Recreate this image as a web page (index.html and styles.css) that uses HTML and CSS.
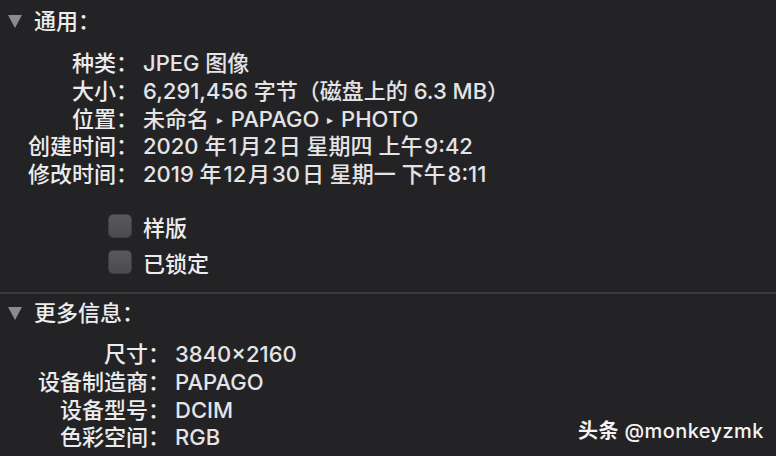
FILE: index.html
```html
<!DOCTYPE html>
<html lang="zh-CN">
<head>
<meta charset="utf-8">
<link rel="stylesheet" href="styles.css">
</head>
<body>
<div class="panel">
  <section class="sec sec-general">
    <div class="sec-head"><span class="tri"></span><span>通用：</span></div>
    <div class="props props-1">
      <div class="lbl">种类：</div><div class="val">JPEG 图像</div>
      <div class="lbl">大小：</div><div class="val">6,291,456 字节（磁盘上的 6.3 MB）</div>
      <div class="lbl">位置：</div><div class="val">未命名 <span class="arr">▸</span> PAPAGO <span class="arr">▸</span> PHOTO</div>
      <div class="lbl">创建时间：</div><div class="val">2020 年&#8202;1&#8202;月&#8202;2&#8202;日 星期四 上午&#8202;9:42</div>
      <div class="lbl">修改时间：</div><div class="val">2019 年&#8202;12&#8202;月&#8202;30&#8202;日 星期一 下午&#8202;8:11</div>
    </div>
    <div class="checks">
      <label class="chk"><span class="box"></span><span>样版</span></label>
      <label class="chk"><span class="box"></span><span>已锁定</span></label>
    </div>
  </section>
  <section class="sec sec-more">
    <div class="sec-head"><span class="tri"></span><span>更多信息：</span></div>
    <div class="props props-2">
      <div class="lbl">尺寸：</div><div class="val">3840×2160</div>
      <div class="lbl">设备制造商：</div><div class="val">PAPAGO</div>
      <div class="lbl">设备型号：</div><div class="val">DCIM</div>
      <div class="lbl">色彩空间：</div><div class="val">RGB</div>
    </div>
  </section>
  <div class="mark"><b>头条</b> @monkeyzmk</div>
</div>
</body>
</html>
```
FILE: styles.css
```css
html, body {
  margin: 0;
  padding: 0;
  background: #232326;
}
body {
  width: 776px;
  height: 456px;
  overflow: hidden;
  font-family: "Inter", "Noto Sans CJK SC", sans-serif;
  font-size: 22px;
  font-weight: 500;
  color: #ececec;
}
.panel {
  position: relative;
  width: 776px;
  height: 456px;
}
.sec-general {
  padding-top: 7px;
  height: 294px;
  box-sizing: border-box;
  border-bottom: 2px solid #3a3a3d;
}
.sec-more {
  padding-top: 5px;
}
.sec-head {
  display: flex;
  align-items: center;
  height: 28px;
  line-height: 28px;
}
.tri {
  width: 0;
  height: 0;
  margin-left: 8px;
  margin-right: 12px;
  border-left: 7px solid transparent;
  border-right: 7px solid transparent;
  border-top: 13px solid #8c8c8e;
}
.props {
  display: grid;
  column-gap: 5px;
  line-height: 27.75px;
}
.props-1 { grid-template-columns: 138px auto; margin-top: 15px; }
.props-2 { grid-template-columns: 170px auto; margin-top: 14px; }
.lbl {
  text-align: right;
  white-space: nowrap;
}
.val {
  white-space: nowrap;
  color: #e4e4e6;
}
.arr {
  font-size: 12px;
  vertical-align: 3px;
  margin: 0 2px;
}
.checks {
  margin-top: 25px;
  margin-left: 108px;
  display: flex;
  flex-direction: column;
  gap: 12px;
}
.chk {
  display: flex;
  align-items: center;
  gap: 11px;
  height: 24px;
}
.box {
  width: 24px;
  height: 24px;
  box-sizing: border-box;
  border-radius: 5px;
  background: linear-gradient(#5a5a5d, #4b4b4e);
  border: 1px solid #3e3e41;
}
.mark {
  position: absolute;
  left: 578px;
  top: 417px;
  font-size: 20px;
  line-height: 28px;
  letter-spacing: 0.4px;
  color: #f4f4f4;
}
.mark b { font-weight: 700; }
```
